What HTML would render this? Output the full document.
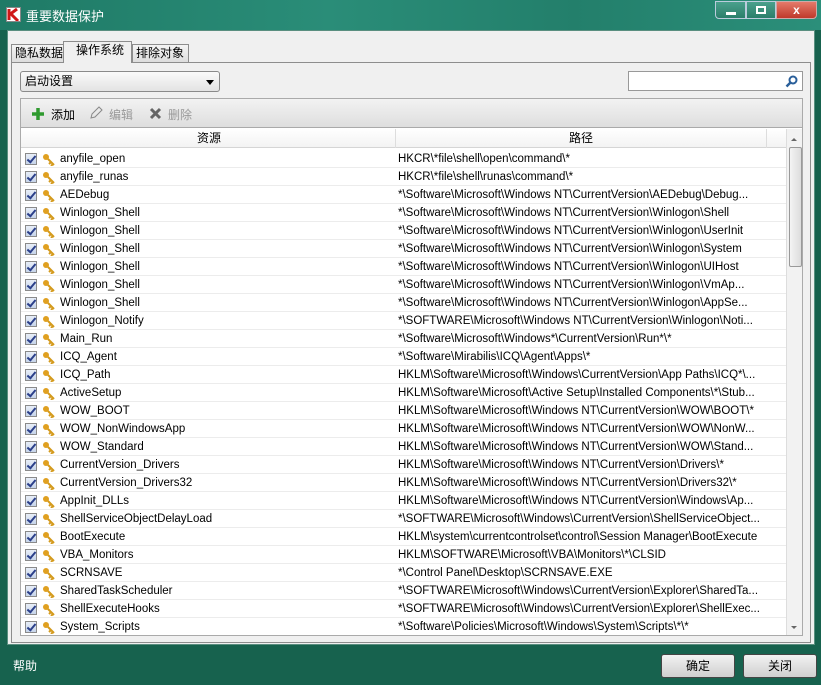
<!DOCTYPE html>
<html><head><meta charset="utf-8"><style>
*{margin:0;padding:0;box-sizing:border-box}
body{width:821px;height:685px;overflow:hidden;background:#17624e;font-family:"Liberation Sans","Noto Sans CJK SC",sans-serif;font-size:12px;color:#000;position:relative}
.abs{position:absolute}
#title{left:0;top:0;width:821px;height:30px;background:linear-gradient(90deg,#1f7a66,#2a8d78 40%,#237f6b 70%,#2b8f7a);}
#client{left:7px;top:30px;width:808px;height:615px;background:#f0f0f0;border:1px solid #5a8f80}
.tab{height:19px;border:1px solid #8d8d8d;border-bottom:none;background:linear-gradient(#f4f4f4,#dcdcdc);font-size:12px;line-height:17px;padding:0 3px;white-space:nowrap}
#panel{left:3px;top:31px;width:800px;height:581px;border:1px solid #8d8d8d;background:#f0f0f0}
.row{position:absolute;left:0;width:765px;height:18px;border-bottom:1px solid #ececec;font-size:11.5px;line-height:18px}
.cb{position:absolute;left:4px;top:3px;width:12px;height:12px;border:1px solid #8a8a8a;background:linear-gradient(#e8eef8,#c6d4ea)}
.cb:after{content:"";position:absolute;left:3px;top:0px;width:3px;height:7px;border:solid #2a3f8a;border-width:0 2px 2px 0;transform:rotate(40deg)}
.key{position:absolute;left:21px;top:3px}
.n{position:absolute;left:39px}
.p{position:absolute;left:377px;white-space:nowrap}
.btn{top:654px;width:74px;height:24px;border:1px solid #444;border-radius:3px;background:linear-gradient(#f2f2f2,#cfcfcf);text-align:center;line-height:22px}
</style></head><body>
<div id="title" class="abs">
 <div class="abs" style="left:6px;top:7px;width:15px;height:15px;background:#fff;border:1px solid #888"><svg width="13" height="13"><path d="M2 1v11M2 7L10 1M4 6l7 7" stroke="#d01818" stroke-width="3" fill="none"/></svg></div>
 <div class="abs" style="left:26px;top:6px;color:#fff;font-size:13px">重要数据保护</div>
 <div class="abs" style="left:715px;top:1px;width:31px;height:18px;border:1px solid #bcd;background:linear-gradient(#4aa08c,#2b7f6b);border-radius:0 0 0 4px"><div class="abs" style="left:10px;top:10px;width:10px;height:3px;background:#fff"></div></div>
 <div class="abs" style="left:746px;top:1px;width:30px;height:18px;border:1px solid #bcd;background:linear-gradient(#4aa08c,#2b7f6b)"><div class="abs" style="left:9px;top:4px;width:10px;height:8px;border:2px solid #fff"></div></div>
 <div class="abs" style="left:776px;top:1px;width:41px;height:18px;border:1px solid #caa;background:linear-gradient(#e47a6a,#c0392b);border-radius:0 0 4px 0;color:#fff;font-weight:bold;text-align:center;line-height:16px">x</div>
</div>
<div id="client" class="abs">
 <div class="abs tab" style="left:3px;top:13px;width:57px">隐私数据</div>
 <div class="abs tab" style="left:124px;top:13px;width:57px">排除对象</div>
 <div id="panel" class="abs">
  <div class="abs" style="left:8px;top:8px;width:200px;height:21px;border:1px solid #8a8a8a;border-radius:3px;background:linear-gradient(#fafafa,#e3e3e3);line-height:19px;padding-left:4px">启动设置<span class="abs" style="right:5px;top:8px;border:4px solid transparent;border-top:5px solid #000"></span></div>
  <div class="abs" style="left:616px;top:8px;width:175px;height:20px;border:1px solid #999;background:#fff"><svg class="abs" style="right:4px;top:3px" width="13" height="13"><circle cx="8" cy="5" r="3.5" stroke="#2a5f9a" stroke-width="2" fill="none"/><path d="M5.5 7.5L1.5 11.5" stroke="#2a5f9a" stroke-width="2.5"/></svg></div>
  <div class="abs" style="left:8px;top:35px;width:783px;height:538px;border:1px solid #aaa;background:#fff;overflow:hidden">
   <div class="abs" style="left:0;top:0;width:783px;height:29px;background:linear-gradient(#f2f2f2,#dedede);border-bottom:1px solid #aaa">
    <svg class="abs" style="left:10px;top:8px" width="14" height="14"><path d="M7 1v12M1 7h12" stroke="#2f9a2f" stroke-width="3.5"/></svg>
    <span class="abs" style="left:30px;top:7px">添加</span>
    <svg class="abs" style="left:68px;top:7px" width="14" height="14"><path d="M2 12l1-4 7-7 3 3-7 7z" stroke="#888" fill="none"/></svg>
    <span class="abs" style="left:88px;top:7px;color:#999">编辑</span>
    <svg class="abs" style="left:128px;top:8px" width="13" height="13"><path d="M2 2l9 9M11 2l-9 9" stroke="#666" stroke-width="3"/></svg>
    <span class="abs" style="left:147px;top:7px;color:#999">删除</span>
   </div>
   <div class="abs" style="left:0;top:30px;width:783px;height:19px;border-bottom:1px solid #d5d5d5;background:linear-gradient(#fff,#f3f3f3);line-height:19px">
    <span class="abs" style="left:176px">资源</span><div class="abs" style="left:374px;top:0;width:1px;height:19px;background:#ddd"></div>
    <span class="abs" style="left:548px">路径</span><div class="abs" style="left:745px;top:0;width:1px;height:19px;background:#ddd"></div>
   </div>
   <div class="abs" style="left:765px;top:30px;width:17px;height:507px;background:#f2f2f2;border-left:1px solid #ddd">
    <div class="abs" style="left:4px;top:6px;border:3px solid transparent;border-bottom:3px solid #666"></div>
    <div class="abs" style="left:2px;top:18px;width:13px;height:120px;border:1px solid #999;border-radius:2px;background:linear-gradient(90deg,#f4f4f4,#dcdcdc)"></div>
    <div class="abs" style="left:4px;bottom:4px;border:3px solid transparent;border-top:3px solid #666"></div>
   </div>
   <div class="abs" id="rows" style="left:0;top:51px">
   </div>
  </div>
 </div>
</div>
<div class="abs" style="left:63px;top:41px;width:69px;height:22px;border:1px solid #8d8d8d;border-bottom:none;background:#f0f0f0;font-size:12px;line-height:17px;padding:0 4px 0 12px">操作系统</div>
<div class="abs" style="left:13px;top:657px;color:#fff">帮助</div>
<div class="abs btn" style="left:661px">确定</div>
<div class="abs btn" style="left:743px">关闭</div>
<script>
var d=[["anyfile_open","HKCR\\*file\\shell\\open\\command\\*"],["anyfile_runas","HKCR\\*file\\shell\\runas\\command\\*"],["AEDebug","*\\Software\\Microsoft\\Windows NT\\CurrentVersion\\AEDebug\\Debug..."],["Winlogon_Shell","*\\Software\\Microsoft\\Windows NT\\CurrentVersion\\Winlogon\\Shell"],["Winlogon_Shell","*\\Software\\Microsoft\\Windows NT\\CurrentVersion\\Winlogon\\UserInit"],["Winlogon_Shell","*\\Software\\Microsoft\\Windows NT\\CurrentVersion\\Winlogon\\System"],["Winlogon_Shell","*\\Software\\Microsoft\\Windows NT\\CurrentVersion\\Winlogon\\UIHost"],["Winlogon_Shell","*\\Software\\Microsoft\\Windows NT\\CurrentVersion\\Winlogon\\VmAp..."],["Winlogon_Shell","*\\Software\\Microsoft\\Windows NT\\CurrentVersion\\Winlogon\\AppSe..."],["Winlogon_Notify","*\\SOFTWARE\\Microsoft\\Windows NT\\CurrentVersion\\Winlogon\\Noti..."],["Main_Run","*\\Software\\Microsoft\\Windows*\\CurrentVersion\\Run*\\*"],["ICQ_Agent","*\\Software\\Mirabilis\\ICQ\\Agent\\Apps\\*"],["ICQ_Path","HKLM\\Software\\Microsoft\\Windows\\CurrentVersion\\App Paths\\ICQ*\\..."],["ActiveSetup","HKLM\\Software\\Microsoft\\Active Setup\\Installed Components\\*\\Stub..."],["WOW_BOOT","HKLM\\Software\\Microsoft\\Windows NT\\CurrentVersion\\WOW\\BOOT\\*"],["WOW_NonWindowsApp","HKLM\\Software\\Microsoft\\Windows NT\\CurrentVersion\\WOW\\NonW..."],["WOW_Standard","HKLM\\Software\\Microsoft\\Windows NT\\CurrentVersion\\WOW\\Stand..."],["CurrentVersion_Drivers","HKLM\\Software\\Microsoft\\Windows NT\\CurrentVersion\\Drivers\\*"],["CurrentVersion_Drivers32","HKLM\\Software\\Microsoft\\Windows NT\\CurrentVersion\\Drivers32\\*"],["AppInit_DLLs","HKLM\\Software\\Microsoft\\Windows NT\\CurrentVersion\\Windows\\Ap..."],["ShellServiceObjectDelayLoad","*\\SOFTWARE\\Microsoft\\Windows\\CurrentVersion\\ShellServiceObject..."],["BootExecute","HKLM\\system\\currentcontrolset\\control\\Session Manager\\BootExecute"],["VBA_Monitors","HKLM\\SOFTWARE\\Microsoft\\VBA\\Monitors\\*\\CLSID"],["SCRNSAVE","*\\Control Panel\\Desktop\\SCRNSAVE.EXE"],["SharedTaskScheduler","*\\SOFTWARE\\Microsoft\\Windows\\CurrentVersion\\Explorer\\SharedTa..."],["ShellExecuteHooks","*\\SOFTWARE\\Microsoft\\Windows\\CurrentVersion\\Explorer\\ShellExec..."],["System_Scripts","*\\Software\\Policies\\Microsoft\\Windows\\System\\Scripts\\*\\*"]];
var key='<svg class="key" width="13" height="13"><circle cx="4" cy="4" r="3" fill="#e0a020"/><path d="M6 6l6 6M9 9l-2 2M11 11l-2 2" stroke="#d49a1c" stroke-width="2"/></svg>';
var h='';d.forEach(function(r,i){h+='<div class="row" style="top:'+(i*18)+'px"><div class="cb"></div>'+key+'<span class="n">'+r[0]+'</span><span class="p">'+r[1]+'</span></div>'});
document.getElementById('rows').innerHTML=h;
</script>
</body></html>
